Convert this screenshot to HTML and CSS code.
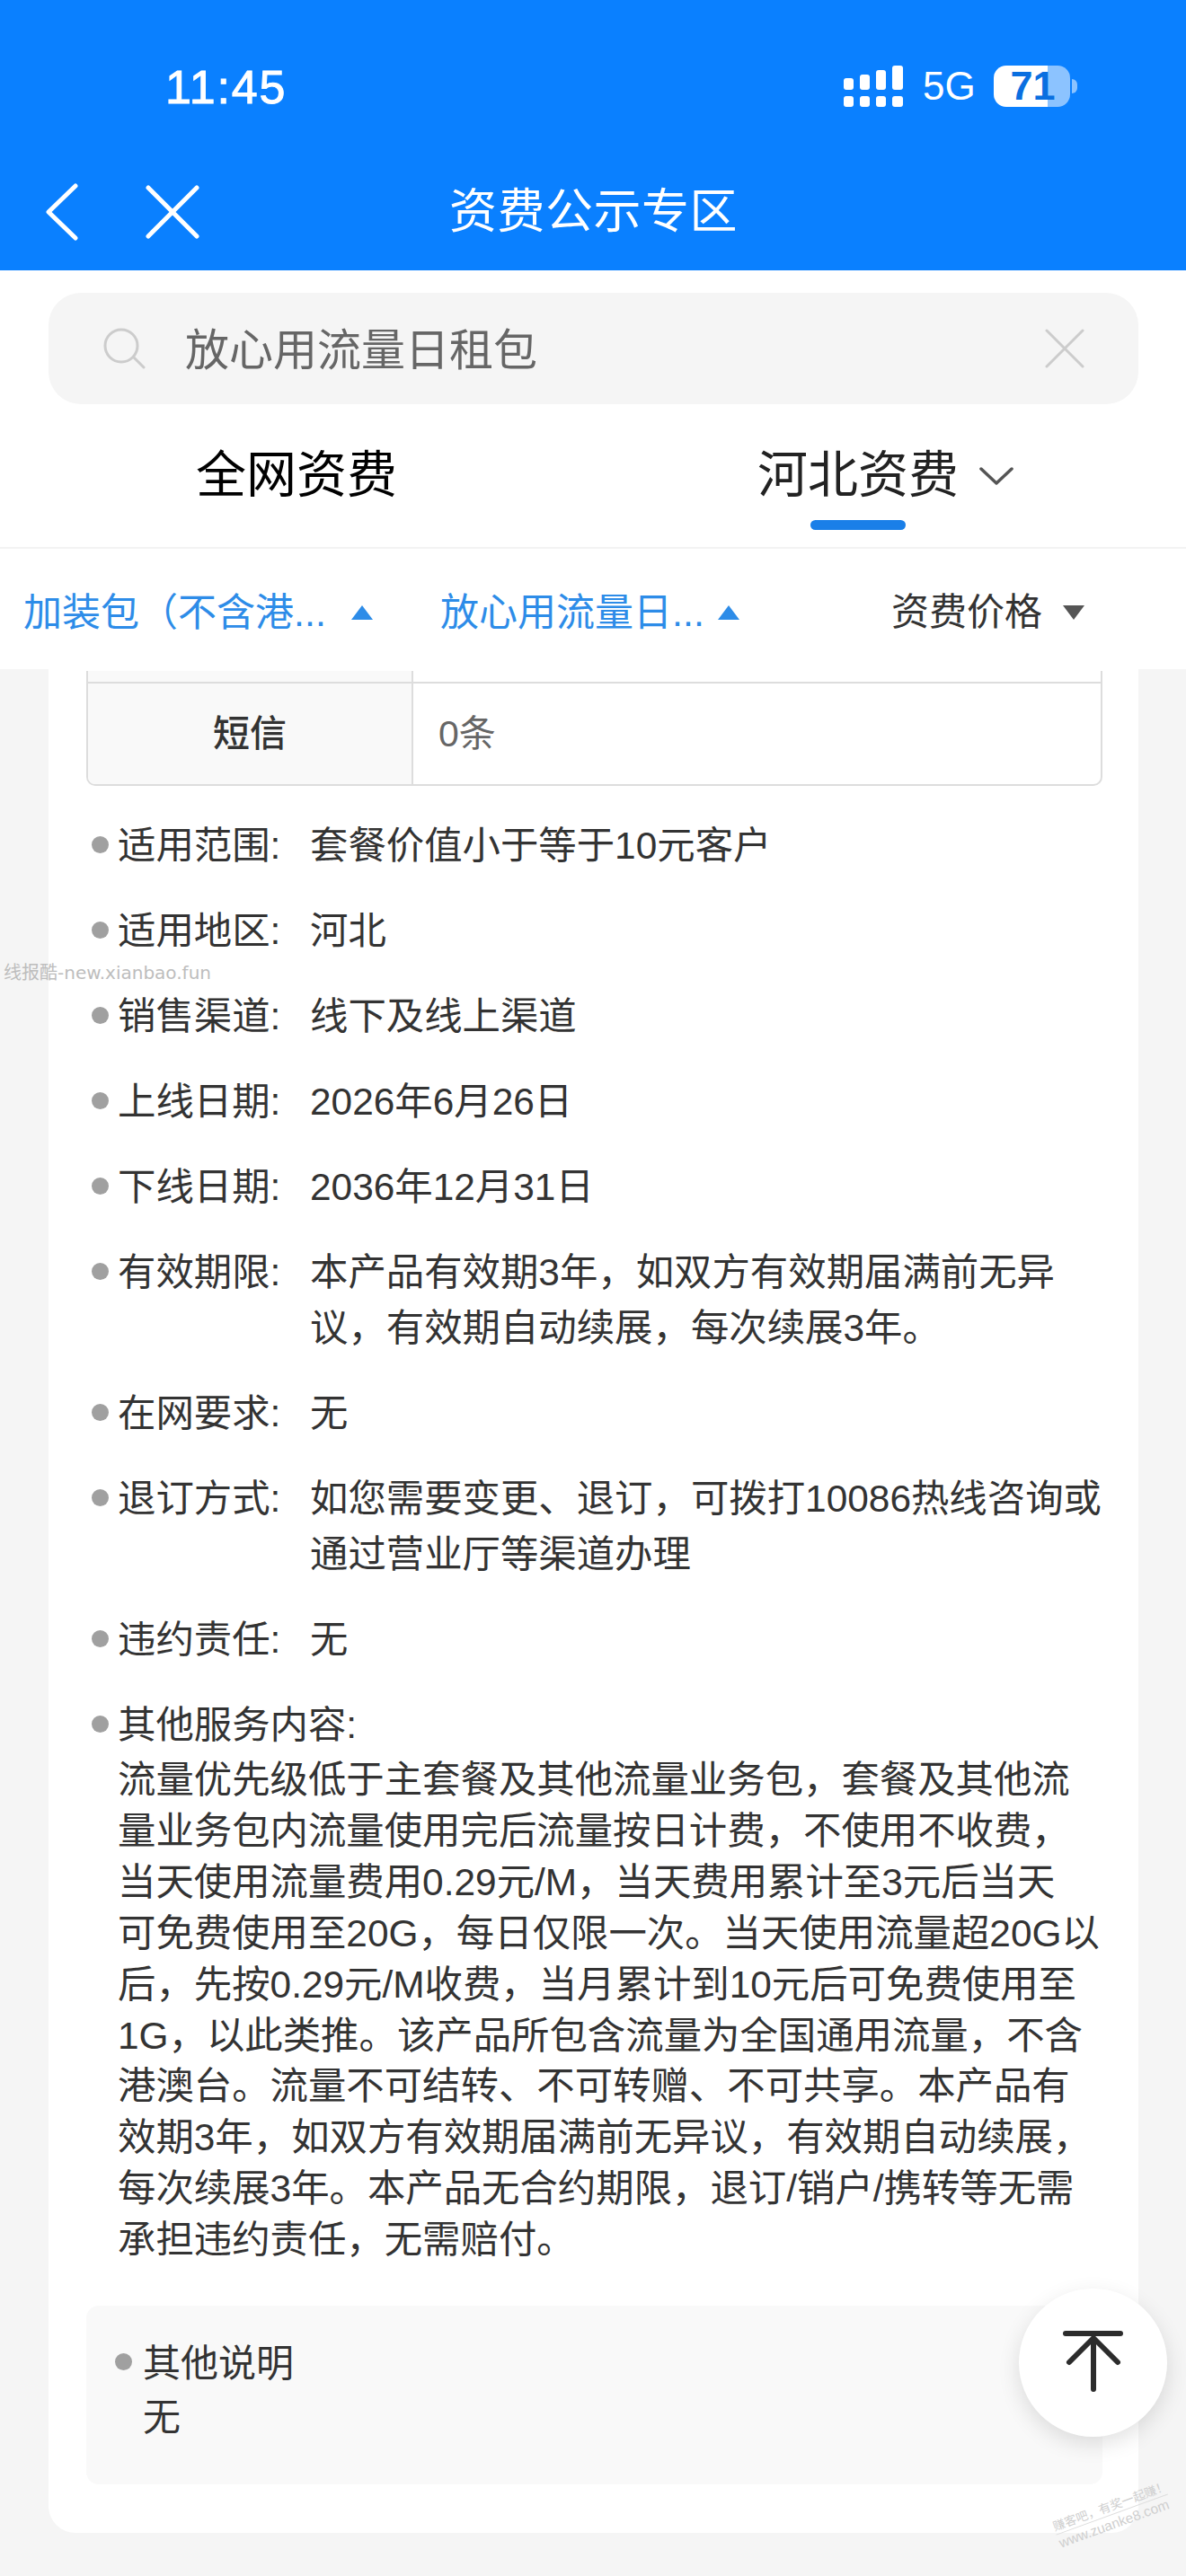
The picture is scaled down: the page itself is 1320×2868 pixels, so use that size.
FILE: index.html
```html
<!DOCTYPE html>
<html lang="zh-CN">
<head>
<meta charset="utf-8">
<title>资费公示专区</title>
<link rel="stylesheet" href="styles.css">
</head>
<body>
<div class="page">
  <header class="header">
    <div class="status">
      <span class="time">11:45</span>
      <div class="status-right">
        <svg class="signal" width="66" height="46" viewBox="0 0 66 46" fill="#fff">
          <rect x="0" y="14" width="11" height="13" rx="3"/><rect x="18" y="10" width="11" height="17" rx="3"/><rect x="36" y="5" width="11" height="22" rx="3"/><rect x="54" y="0" width="12" height="27" rx="3"/>
          <rect x="0" y="34" width="11" height="12" rx="3"/><rect x="18" y="34" width="11" height="12" rx="3"/><rect x="36" y="34" width="11" height="12" rx="3"/><rect x="54" y="34" width="12" height="12" rx="3"/>
        </svg>
        <span class="net">5G</span>
        <div class="battery"><span class="battery-num">71</span></div>
      </div>
    </div>
    <div class="nav">
      <svg class="nav-back" width="36" height="64" viewBox="0 0 36 64" fill="none" stroke="#fff" stroke-width="5" stroke-linecap="round" stroke-linejoin="round"><path d="M33 3 3 32l30 29"/></svg>
      <svg class="nav-close" width="60" height="60" viewBox="0 0 60 60" fill="none" stroke="#fff" stroke-width="5" stroke-linecap="round"><path d="M3 3l54 54M57 3 3 57"/></svg>
      <h1 class="nav-title">资费公示专区</h1>
    </div>
  </header>

  <div class="search-wrap">
    <div class="search">
      <svg class="search-icon" width="48" height="46" viewBox="0 0 48 46" fill="none" stroke="#ccc" stroke-width="3" stroke-linecap="round"><circle cx="21" cy="20" r="18"/><path d="M35 33l11 11"/></svg>
      <span class="search-text">放心用流量日租包</span>
      <svg class="search-clear" width="44" height="44" viewBox="0 0 44 44" fill="none" stroke="#ccc" stroke-width="3" stroke-linecap="round"><path d="M2 2l40 40M42 2 2 42"/></svg>
    </div>
  </div>

  <div class="tabs">
    <span class="tab tab-all">全网资费</span>
    <div class="tab-hebei">
      <span class="tab">河北资费</span>
      <svg class="tab-chevron" width="38" height="20" viewBox="0 0 38 20" fill="none" stroke="#555" stroke-width="3.5" stroke-linecap="round" stroke-linejoin="round"><path d="M2 2l17 16L36 2"/></svg>
      <i class="tab-line"></i>
    </div>
  </div>

  <div class="filters">
    <div class="filter filter-one"><span class="filter-text">加装包（不含港...</span><i class="tri tri-up"></i></div>
    <div class="filter filter-two"><span class="filter-text">放心用流量日...</span><i class="tri tri-up"></i></div>
    <div class="filter filter-three"><span class="filter-text dark">资费价格</span><i class="tri tri-down"></i></div>
  </div>

  <main class="main">
    <section class="card">
      <div class="table">
        <div class="tr tr-stub"><div class="th"></div><div class="td"></div></div>
        <div class="tr tr-last"><div class="th">短信</div><div class="td">0条</div></div>
      </div>

      <ul class="list">
        <li class="row"><i class="dot"></i><span class="label">适用范围:</span><span class="value">套餐价值小于等于10元客户</span></li>
        <li class="row"><i class="dot"></i><span class="label">适用地区:</span><span class="value">河北</span></li>
        <li class="row"><i class="dot"></i><span class="label">销售渠道:</span><span class="value">线下及线上渠道</span></li>
        <li class="row"><i class="dot"></i><span class="label">上线日期:</span><span class="value">2026年6月26日</span></li>
        <li class="row"><i class="dot"></i><span class="label">下线日期:</span><span class="value">2036年12月31日</span></li>
        <li class="row"><i class="dot"></i><span class="label">有效期限:</span><span class="value">本产品有效期3年，如双方有效期届满前无异<br>议，有效期自动续展，每次续展3年。</span></li>
        <li class="row"><i class="dot"></i><span class="label">在网要求:</span><span class="value">无</span></li>
        <li class="row"><i class="dot"></i><span class="label">退订方式:</span><span class="value">如您需要变更、退订，可拨打10086热线咨询或<br>通过营业厅等渠道办理</span></li>
        <li class="row"><i class="dot"></i><span class="label">违约责任:</span><span class="value">无</span></li>
        <li class="row row-block"><i class="dot"></i>
          <div class="block">
            <div class="block-title">其他服务内容:</div>
            <p class="block-text">流量优先级低于主套餐及其他流量业务包，套餐及其他流<br>量业务包内流量使用完后流量按日计费，不使用不收费，<br>当天使用流量费用0.29元/M，当天费用累计至3元后当天<br>可免费使用至20G，每日仅限一次。当天使用流量超20G以<br>后，先按0.29元/M收费，当月累计到10元后可免费使用至<br>1G，以此类推。该产品所包含流量为全国通用流量，不含<br>港澳台。流量不可结转、不可转赠、不可共享。本产品有<br>效期3年，如双方有效期届满前无异议，有效期自动续展，<br>每次续展3年。本产品无合约期限，退订/销户/携转等无需<br>承担违约责任，无需赔付。</p>
          </div>
        </li>
      </ul>

      <div class="note">
        <div class="note-head"><i class="dot"></i><span>其他说明</span></div>
        <div class="note-body">无</div>
      </div>
    </section>
  </main>

  <div class="watermark-left">线报酷-new.xianbao.fun</div>
  <div class="watermark-right"><span class="wm-top">赚客吧，有奖一起赚！</span><span class="wm-bottom">www.zuanke8.com</span></div>
  <button class="fab" type="button" aria-label="返回顶部">
    <svg width="70" height="70" viewBox="0 0 70 70" fill="none" stroke="#2c2c2c" stroke-width="6" stroke-linecap="round" stroke-linejoin="round"><path d="M4 4h61M35 10v56M8 36l27-27 27 27"/></svg>
  </button>
</div>
</body>
</html>
```
FILE: styles.css
```css
* { box-sizing: border-box; }
html, body { margin: 0; padding: 0; }
body {
  width: 1320px;
  height: 2868px;
  overflow: hidden;
  background: #f5f5f5;
  font-family: "Liberation Sans", "Noto Sans CJK SC", sans-serif;
  color: #333;
}
.page { position: relative; width: 1320px; height: 2868px; display: flex; flex-direction: column; }

/* header */
.header { height: 301px; background: #0a80ff; color: #fff; display: flex; flex-direction: column; flex: none; }
.status { padding: 74px 129px 0 184px; display: flex; justify-content: space-between; align-items: flex-start; flex: none; height: 198px; }
.time { font-size: 52px; line-height: 46px; font-weight: 400; letter-spacing: 1.8px; -webkit-text-stroke: 1px #fff; }
.status-right { display: flex; align-items: center; height: 46px; margin-top: -1px; }
.signal { display: block; margin-right: 22px; }
.net { font-size: 44px; line-height: 46px; width: 79px; }
.battery {
  position: relative;
  width: 85px;
  height: 46px;
  border-radius: 14px;
  background: linear-gradient(90deg, #fff 0 70.5%, #8cc3ff 70.5% 100%);
  color: #0a6fe0;
  text-align: center;
  padding-left: 2px;
}
.battery::after { content: ""; position: absolute; left: 87px; top: 15px; width: 6px; height: 16px; border-radius: 0 8px 8px 0; background: #8cc3ff; }
.battery-num { font-size: 45px; line-height: 46px; font-weight: 700; }
.nav { flex: 1; display: flex; align-items: flex-start; padding: 6px 0 0 51px; position: relative; }
.nav-back { display: block; flex: none; }
.nav-close { display: block; flex: none; margin: 2px 0 0 75px; }
.nav-title { margin: 0; font-size: 53px; line-height: 64px; font-weight: 400; width: 320px; margin-left: 278px; margin-top: 0; text-align: center; white-space: nowrap; letter-spacing: .5px; }

/* search */
.search-wrap { background: #fff; padding: 25px 53px 0 54px; flex: none; height: 163px; }
.search { height: 124px; background: #f5f5f5; border-radius: 36px; display: flex; align-items: center; padding: 0 60px 0 60px; }
.search-icon { display: block; flex: none; margin-right: 44px; }
.search-text { flex: 1; font-size: 49px; line-height: 60px; color: #666; padding-top: 3px; }
.search-clear { display: block; flex: none; }

/* tabs */
.tabs { background: #fff; height: 147px; flex: none; display: flex; align-items: flex-start; padding: 27px 0 0 218px; border-bottom: 2px solid #f3f3f3; }
.tab { font-size: 56px; line-height: 76px; color: #000; white-space: nowrap; }
.tab-all { width: 625px; display: block; }
.tab-hebei { position: relative; display: flex; align-items: center; height: 76px; }
.tab-hebei .tab { color: #222; }
.tab-chevron { display: block; margin-left: 23px; margin-top: 2px; }
.tab-line { position: absolute; left: 59px; top: 88px; width: 106px; height: 11px; border-radius: 6px; background: #1a7fe8; }

/* filters */
.filters { background: #fff; height: 134px; flex: none; display: flex; align-items: center; position: relative; z-index: 1; padding-top: 7px; }
.filter { display: flex; align-items: center; }
.filter-one { padding-left: 26px; width: 490px; }
.filter-two { width: 502px; }
.filter-text { font-size: 43px; line-height: 56px; color: #2d8ce8; white-space: nowrap; }
.filter-text.dark { color: #333; font-size: 42px; }
.tri { display: block; width: 0; height: 0; border-left: 12px solid transparent; border-right: 12px solid transparent; margin-left: 28px; flex: none; }
.filter-two .tri { margin-left: 15px; }
.filter-three .tri { margin-left: 23px; }
.tri-up { border-bottom: 16px solid #2d8ce8; }
.tri-down { border-top: 16px solid #555; }

/* card */
.main { flex: none; padding: 0 53px 0 54px; }
.card { background: #fff; height: 2075px; padding: 2px 40px 0 42px; border-radius: 0 0 30px 30px; display: flex; flex-direction: column; }

.table { border: 2px solid #ddd; border-top: 0; border-radius: 0 0 10px 10px; overflow: hidden; flex: none; }
.tr { display: flex; }
.tr-stub { height: 12px; }
.tr-last { height: 114px; border-top: 2px solid #ddd; }
.th { width: 362px; background: #f9f9f9; border-right: 2px solid #ddd; font-size: 41px; line-height: 112px; text-align: center; font-weight: 500; flex: none; }
.td { flex: 1; font-size: 41px; line-height: 112px; color: #666; padding-left: 28px; }

.list { list-style: none; margin: 36px 0 0; padding: 0; display: flex; flex-direction: column; gap: 33px; }
.row { display: flex; align-items: flex-start; font-size: 42.4px; line-height: 62px; padding-left: 6px; }
.dot { display: block; width: 19px; height: 19px; border-radius: 50%; background: #a0a0a0; margin-top: 20px; flex: none; }
.label { width: 214px; margin-left: 10px; flex: none; white-space: nowrap; }
.value { flex: 1; white-space: nowrap; }
.block { margin-left: 10px; flex: 1; }
.block-title { white-space: nowrap; }
.block-text { margin: 2px 0 0; line-height: 56.9px; white-space: nowrap; }

.note { margin-top: 44px; height: 199px; background: #f9f9f9; border-radius: 14px; padding: 35px 0 0 32px; font-size: 42px; line-height: 60px; flex: none; }
.note-head { display: flex; align-items: flex-start; }
.note-head .dot { margin-top: 18px; margin-right: 12px; }
.note-body { padding-left: 31px; }

/* overlays */
.watermark-left { position: absolute; left: 4px; top: 1067px; font-family: "DejaVu Sans", "Noto Sans CJK SC", sans-serif; font-size: 20px; line-height: 32px; color: #bdbdbd; white-space: nowrap; }
.watermark-right { position: absolute; left: 1172px; top: 2782px; width: 132px; display: flex; flex-direction: column; transform: rotate(-20deg); color: #cfcfcf; white-space: nowrap; }
.wm-top { font-size: 13.5px; line-height: 17px; border-bottom: 1px solid #ddd; }
.wm-bottom { font-size: 15.5px; line-height: 19px; }
.fab { position: absolute; left: 1134px; top: 2548px; width: 165px; height: 165px; border: 0; padding: 0; border-radius: 50%; background: #fff; box-shadow: 0 8px 24px rgba(0,0,0,.12); display: flex; align-items: center; justify-content: center; }
.fab svg { display: block; margin-top: -3px; margin-left: 1px; }
```
